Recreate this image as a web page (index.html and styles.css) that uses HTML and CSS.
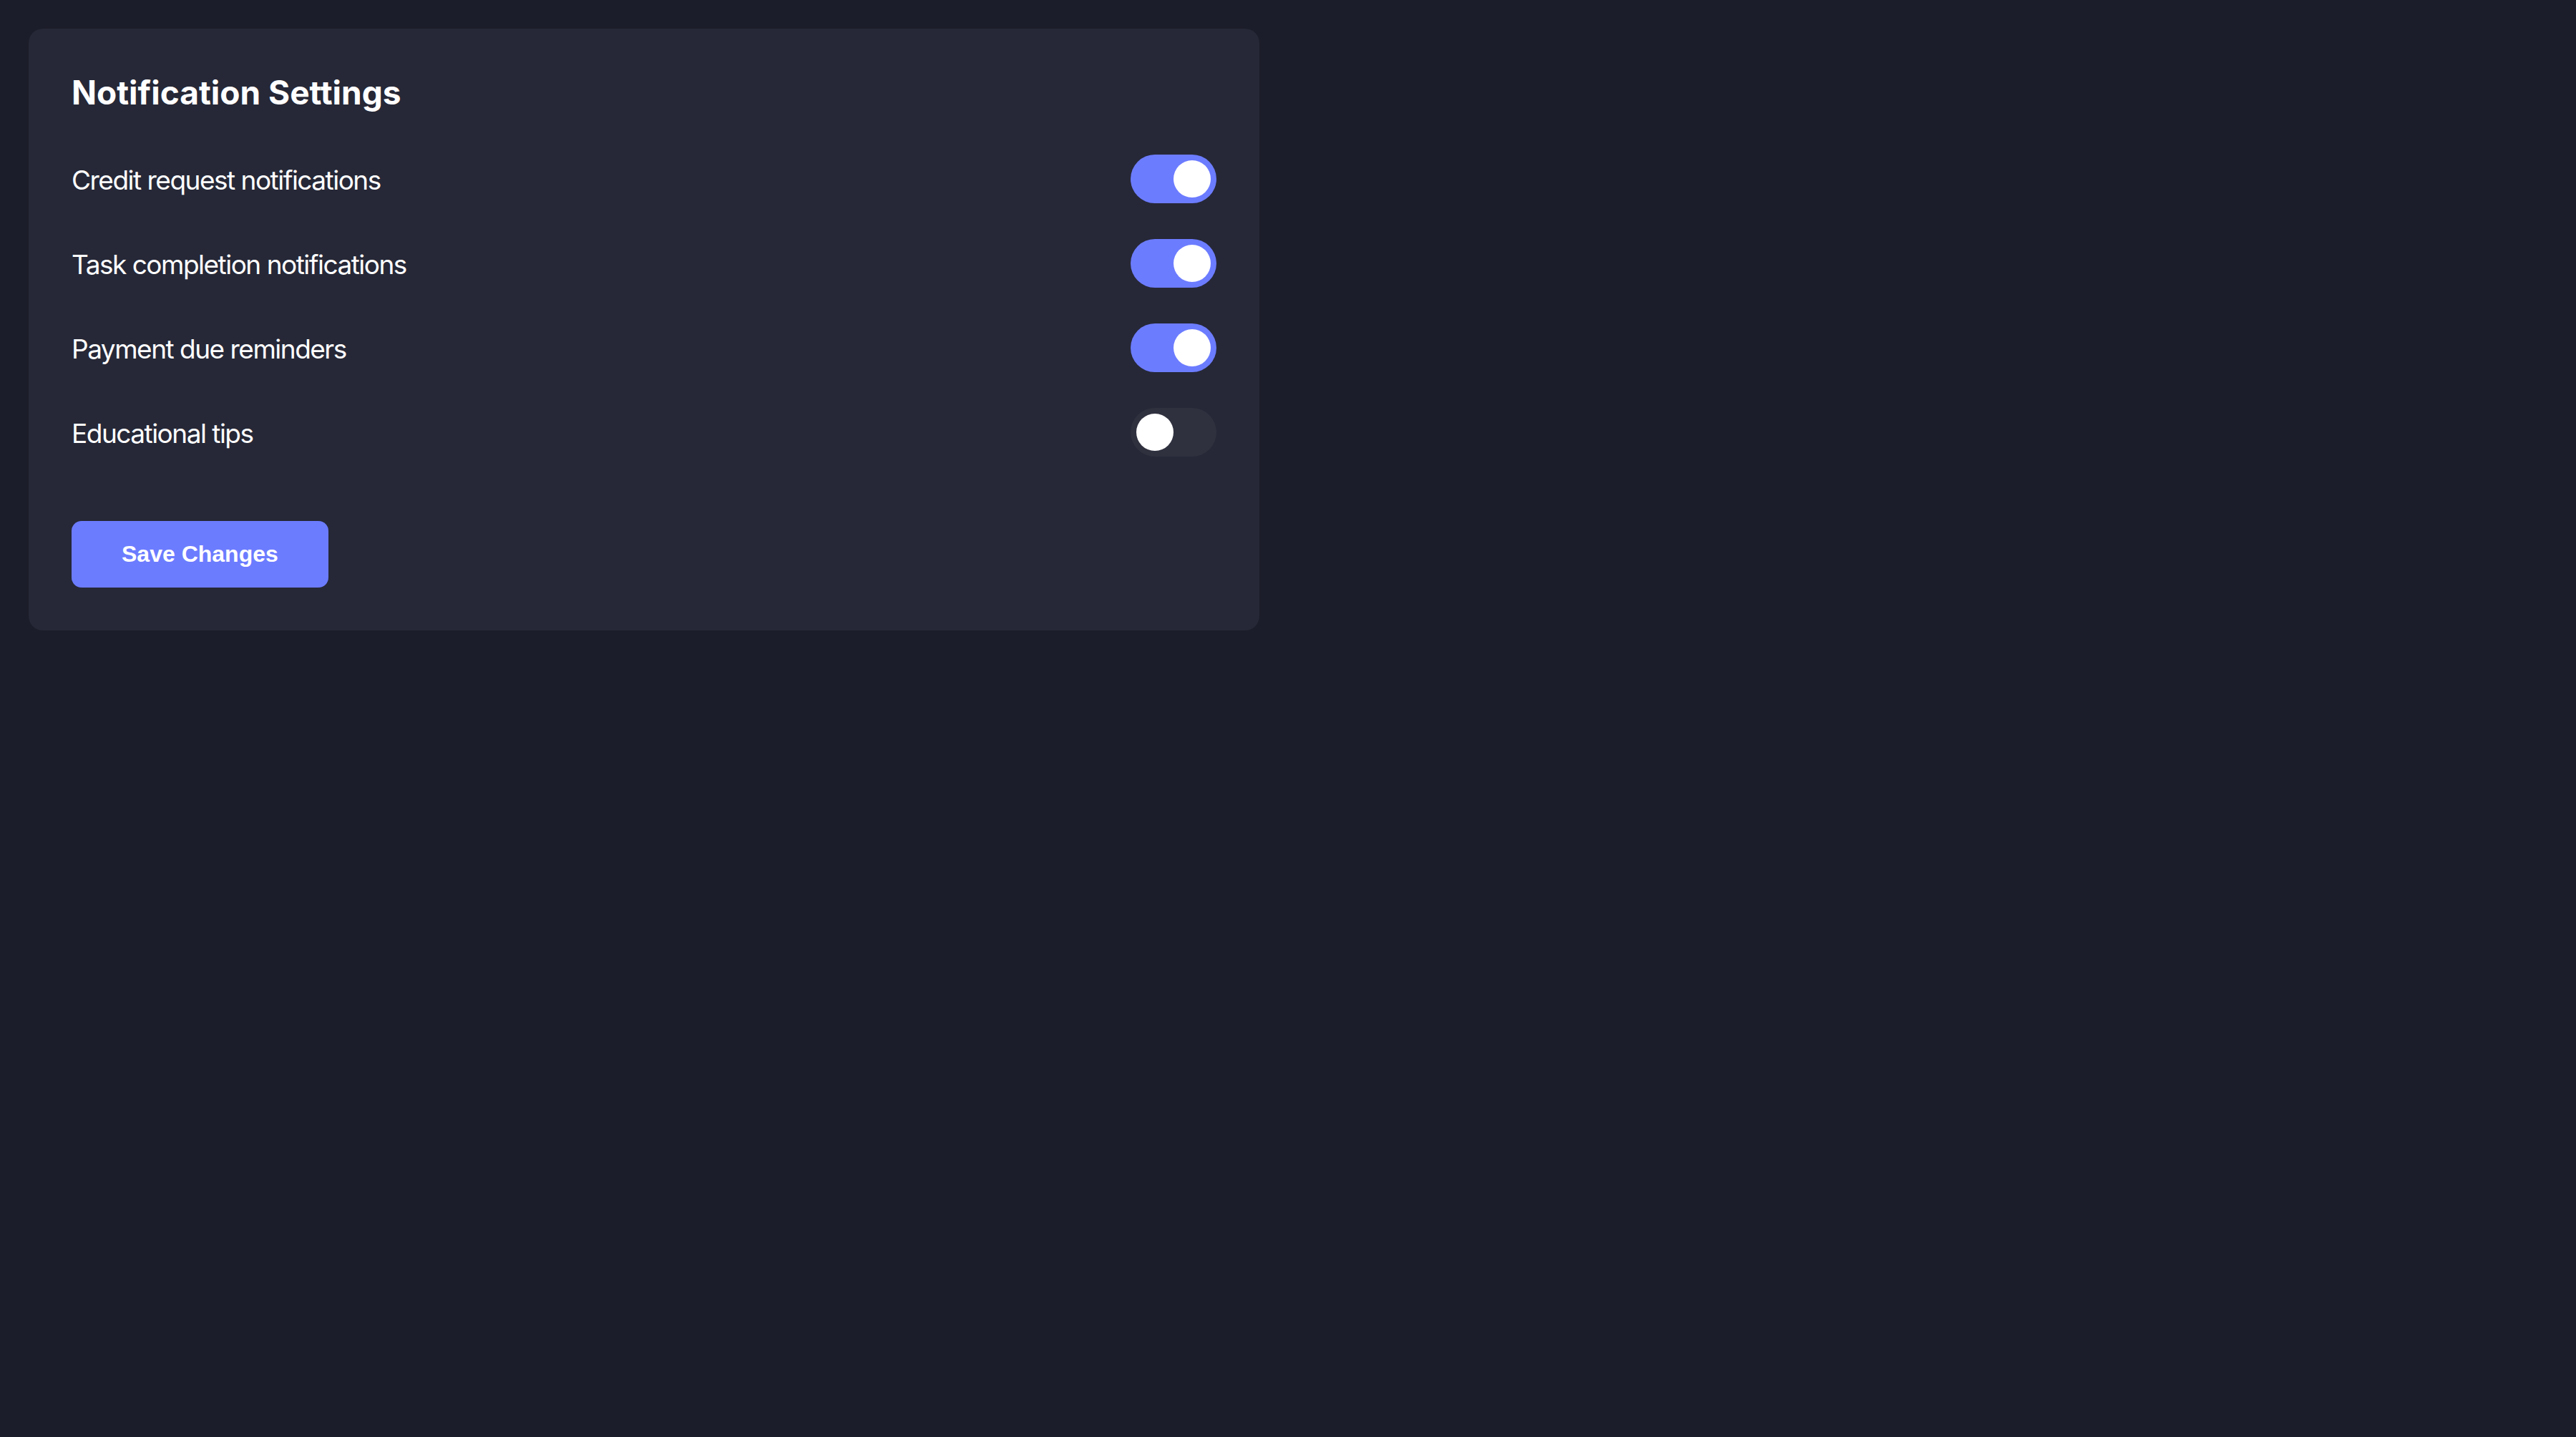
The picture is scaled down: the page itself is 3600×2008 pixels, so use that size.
FILE: index.html
```html
<!DOCTYPE html>
<html lang="en">
<head>
<meta charset="utf-8">
<title>Notification Settings</title>
<link rel="stylesheet" href="styles.css">
</head>
<body>
  <section class="card">
    <h1 class="title">Notification Settings</h1>
    <div class="rows">
      <div class="row">
        <span class="label">Credit request notifications</span>
        <span class="toggle on"><span class="knob"></span></span>
      </div>
      <div class="row">
        <span class="label">Task completion notifications</span>
        <span class="toggle on"><span class="knob"></span></span>
      </div>
      <div class="row">
        <span class="label">Payment due reminders</span>
        <span class="toggle on"><span class="knob"></span></span>
      </div>
      <div class="row">
        <span class="label">Educational tips</span>
        <span class="toggle"><span class="knob"></span></span>
      </div>
    </div>
    <button class="save" type="button">Save Changes</button>
  </section>
</body>
</html>
```
FILE: styles.css
```css
html, body {
  margin: 0;
  padding: 0;
}
body {
  background: #1c1d2a;
  min-height: 2008px;
  padding: 40px;
  box-sizing: border-box;
  font-family: Inter, "Noto Sans", sans-serif;
  color: #ffffff;
}
.card {
  width: 1720px;
  box-sizing: border-box;
  background: #262837;
  border-radius: 20px;
  padding: 60px;
  display: flex;
  flex-direction: column;
  align-items: flex-start;
}
.title {
  margin: 0 0 58px 0;
  font-size: 46px;
  line-height: 58px;
  font-weight: 700;
  letter-spacing: 0;
}
.rows {
  align-self: stretch;
  display: flex;
  flex-direction: column;
  gap: 50px;
}
.row {
  display: flex;
  align-items: center;
  justify-content: space-between;
  height: 68px;
}
.label {
  font-size: 37px;
  line-height: 60px;
  padding-top: 4px;
  font-weight: 400;
  letter-spacing: -1.5px;
}
.toggle {
  width: 120px;
  height: 68px;
  border-radius: 34px;
  background: #30313f;
  box-sizing: border-box;
  padding: 8px;
  display: flex;
  justify-content: flex-start;
}
.toggle.on {
  background: #6c7cff;
  justify-content: flex-end;
}
.knob {
  width: 52px;
  height: 52px;
  border-radius: 50%;
  background: #ffffff;
}
.save {
  margin-top: 90px;
  height: 93px;
  padding: 0 70px;
  border: none;
  border-radius: 14px;
  background: #6c7cff;
  color: #ffffff;
  font-family: "Liberation Sans", Arial, sans-serif;
  font-weight: 700;
  font-size: 32px;
}
```
